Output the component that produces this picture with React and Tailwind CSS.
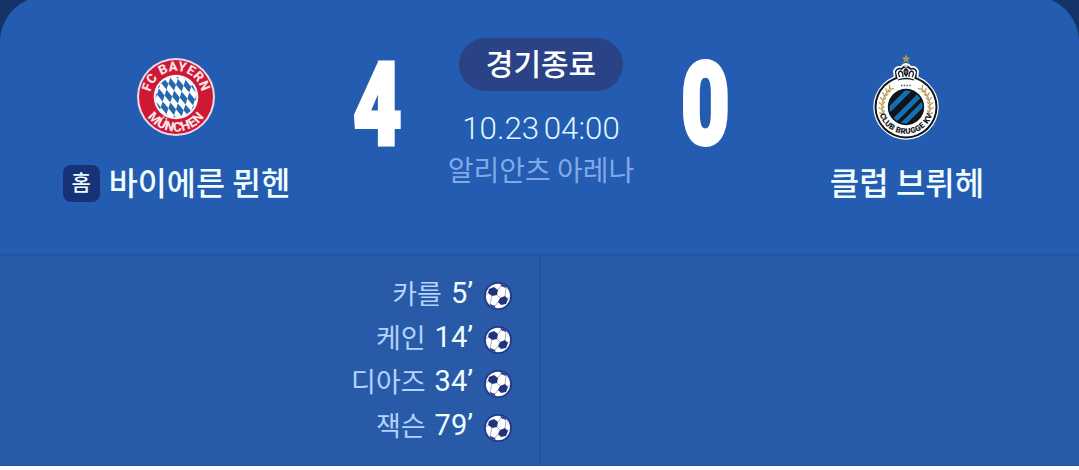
import React from 'react';

const goals = [
  { player: '카를', minute: '5’' },
  { player: '케인', minute: '14’' },
  { player: '디아즈', minute: '34’' },
  { player: '잭슨', minute: '79’' },
];

const diamondRows = [-2, -1, 0, 1, 2];
const diamondCols = [-4, -3, -2, -1, 0, 1, 2, 3, 4];

const BayernLogo = () => (
  <svg viewBox="-40 -40 80 80" className="w-20 h-20">
    <defs>
      <clipPath id="bayern-core"><circle r="20.3" /></clipPath>
      <path id="bayern-top" d="M-25 7A26 26 0 1 1 25 7" />
      <path id="bayern-bottom" d="M-34.6 0A34.6 34.6 0 0 0 34.6 0" />
    </defs>
    <circle r="39" fill="#eed9e6" />
    <circle r="37" fill="#cf1834" />
    <circle r="22.3" fill="#f5f3fa" />
    <circle r="20.3" fill="#fff" />
    <g clipPath="url(#bayern-core)" fill="#2468ae">
      {diamondRows.map((r) =>
        diamondCols.map((c) => (
          <path
            key={`${r}-${c}`}
            d="M-1.9-6.4L3.8 0.5L1.9 6.4L-3.8-0.5Z"
            transform={`translate(${c * 7.6 + r * 3.8} ${c + r * 12.8})`}
          />
        ))
      )}
    </g>
    <g fill="#fbe6ea" fontFamily="Roboto, sans-serif" fontWeight="800" fontSize="13.2" textAnchor="middle" letterSpacing="0.3">
      <text><textPath href="#bayern-top" startOffset="50%">FC BAYERN</textPath></text>
      <text><textPath href="#bayern-bottom" startOffset="50%">MÜNCHEN</textPath></text>
    </g>
  </svg>
);

const laurelAngles = [-28, -17, -6, 5, 16, 27, 38, 48];

const BruggeLogo = () => (
  <svg viewBox="-34 -53 68 87" className="w-[68px] h-[87px] mr-0.5">
    <defs>
      <clipPath id="brugge-core"><circle r="16.5" /></clipPath>
      <path id="brugge-bottom" d="M-27.5-3A27.6 27.6 0 1 0 27.5-3" />
    </defs>
    <path d="M0-53L1.2-49.7L4.3-49.5L1.9-47.3L2.8-44L0-45.9L-2.8-44L-1.9-47.3L-4.3-49.5L-1.2-49.7Z" fill="#aa9453" />
    <circle r="32.7" fill="#fff" />
    <path d="M-11-26L-12-36Q-10-41-5-40Q0-46 5-40Q10-41 12-36L11-26Z" fill="#111d2c" stroke="#fff" strokeWidth="1.8" />
    <circle r="31.5" fill="#10151c" />
    <circle r="29.5" fill="#fff" />
    <path d="M-8-27L-10-35Q-8-39-4.5-37Q0-42 4.5-37Q8-39 10-35L8-27Z" fill="#fff" />
    <path d="M-6-30Q-9-34-6-36Q-3-36-3-30M6-30Q9-34 6-36Q3-36 3-30M0-31V-40M-2-36Q0-40 2-36Q2-33 0-31Q-2-33-2-36M-8-27Q0-30 8-27" fill="none" stroke="#101722" strokeWidth="1.3" />
    <path d="M-1.8-41H1.8M0-43V-39" stroke="#fff" strokeWidth="1" />
    <path d="M-5-21.5H5" stroke="#59636d" strokeWidth="1.6" strokeDasharray="1.5 1.2" />
    <g fill="none" stroke="#b99d5c" strokeWidth="1.3">
      {laurelAngles.map((a) => (
        <g key={a}>
          <path d="M-24 0L-27.5-2.4M-24 0L-21.6-3.4M-24 0V3" transform={`rotate(${a})`} />
          <path d="M24 0L27.5-2.4M24 0L21.6-3.4M24 0V3" transform={`rotate(${-a})`} />
        </g>
      ))}
    </g>
    <path d="M-27 9A28.5 28.5 0 0 0 27 9L17 6A19 19 0 0 1-17 6Z" fill="#fff" />
    <circle r="18.2" fill="#10151c" />
    <g clipPath="url(#brugge-core)" stroke="#176eae" strokeWidth="4.9">
      <path d="M-22 8L8-22M-18 20L20-18M-8 22L22-8" />
    </g>
    <text fill="#151a20" fontFamily="Roboto, sans-serif" fontWeight="900" fontSize="8" letterSpacing="0.3" textAnchor="middle">
      <textPath href="#brugge-bottom" startOffset="50%">CLUB BRUGGE KV</textPath>
    </text>
  </svg>
);

const Ball = () => (
  <svg viewBox="-14 -14 28 28" className="w-7 h-7 mt-[3px]">
    <defs>
      <clipPath id="ball"><circle r="12.2" /></clipPath>
    </defs>
    <circle r="14" fill="#21398a" />
    <circle r="12.2" fill="#fff" />
    <g clipPath="url(#ball)" fill="#21347b">
      <path d="M-9-7L-4-9L0-6L-1-1L-6 0L-10-3Z" />
      <path d="M2 2L7 0L10 3L8 8L3 9L0 6Z" />
      <path d="M2-14L9-11L8-8L3-10Z" />
      <path d="M-2 14L-9 11L-8 8L-3 10Z" />
      <path d="M12-5L14-3V3L12 1Z" />
      <path d="M-12 5L-14 3V-3L-12-1Z" />
      <path d="M0-6L3-10M-1-1L2 2M-6 0L-8 8M0 6L-3 10M7 0L8-8M10 3L12 1M-10-3L-12-1" stroke="#7e88b8" strokeWidth="0.7" />
    </g>
  </svg>
);

const Score = ({ value }) => (
  <div className="w-[50px] h-[90px] mt-[60px] flex justify-center font-[Roboto,sans-serif] text-[115px] leading-[90px] font-black text-white">
    <span className="block scale-x-[0.73] [-webkit-text-stroke:4px_white]">{value}</span>
  </div>
);

const App = () => {
  return (
    <div className="w-[1079px] h-[470px] overflow-hidden bg-[#143467] font-['Noto_Sans_CJK_KR',sans-serif]">
      <div className="-mt-1 h-[474px] rounded-t-[46px] overflow-hidden bg-[#245cb1]">
        {/* Match summary */}
        <div className="flex h-[258px] pt-1">
          <div className="w-[352px] pt-[57px] flex flex-col items-center">
            <BayernLogo />
            <div className="mt-[25px] ml-px flex items-center gap-[9px] h-[42px]">
              <span className="w-[37px] h-[37px] rounded-lg bg-[#183277] text-[#eafcff] text-[21px] leading-[33px] font-medium text-center">홈</span>
              <span className="-mt-1 text-[31.6px] leading-[42px] font-medium text-[#effdff] whitespace-nowrap">바이에른 뮌헨</span>
            </div>
          </div>

          <Score value="4" />

          <div className="w-[278px] pt-[38px] flex flex-col items-center">
            <div className="w-[164px] h-[53px] rounded-full bg-[#2a4386] text-white text-[30px] leading-[48px] font-medium text-center">경기종료</div>
            <div className="mt-[19px] h-[38px] font-[Roboto,sans-serif] font-light text-[31.3px] leading-[38px] text-[#dff7ff] [word-spacing:-3px] whitespace-nowrap">10.23 04:00</div>
            <div className="h-[42px] text-[28px] leading-[42px] text-[#80a9e7] whitespace-nowrap">알리안츠 아레나</div>
          </div>

          <Score value="0" />

          <div className="w-[349px] pl-[5px] pt-[54px] flex flex-col items-center">
            <BruggeLogo />
            <div className="mt-[19px] h-[42px] text-[32px] leading-[42px] font-medium text-[#effdff] whitespace-nowrap">클럽 브뤼헤</div>
          </div>
        </div>

        {/* Goals */}
        <div className="flex h-[212px] border-t-2 border-b border-[#2354a1] bg-[#285aa8]">
          <div className="w-[541px] pr-[27px] pt-4 border-r-2 border-[#2354a1]">
            {goals.map((goal) => (
              <div key={goal.player} className="flex h-11 items-center justify-end">
                <span className="-mt-0.5 text-[27px] leading-[44px] text-[#b3d2ff]">{goal.player}</span>
                <span className="-mt-0.5 ml-[9px] mr-[11px] font-[Roboto,sans-serif] text-[29px] leading-[44px] text-[#effdff]">{goal.minute}</span>
                <Ball />
              </div>
            ))}
          </div>
        </div>
        <div className="h-1 bg-white" />
      </div>
    </div>
  );
};

export default App;
